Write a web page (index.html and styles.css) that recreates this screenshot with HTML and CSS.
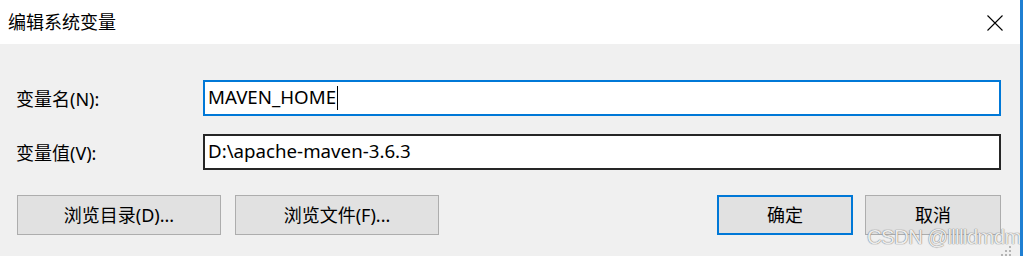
FILE: index.html
```html
<!DOCTYPE html>
<html lang="zh-CN">
<head>
<meta charset="utf-8">
<title>编辑系统变量</title>
<link rel="stylesheet" href="styles.css">
</head>
<body>
<div class="window">
  <div class="titlebar">
    <span class="title">编辑系统变量</span>
    <span class="close" aria-label="关闭">
      <svg width="16" height="16" viewBox="0 0 16 16"><path d="M0.5 0.5 L15.5 15.5 M15.5 0.5 L0.5 15.5" stroke="#000" stroke-width="1.1" fill="none"/></svg>
    </span>
  </div>
  <div class="content">
    <div class="row">
      <label class="label">变量名(N):</label>
      <div class="field focused"><span class="value">MAVEN_HOME</span><span class="caret"></span></div>
    </div>
    <div class="row">
      <label class="label">变量值(V):</label>
      <div class="field"><span class="value">D:\apache-maven-3.6.3</span></div>
    </div>
    <div class="buttons">
      <div class="group">
        <button class="btn wide">浏览目录(D)...</button>
        <button class="btn wide">浏览文件(F)...</button>
      </div>
      <div class="group right">
        <button class="btn default">确定</button>
        <button class="btn">取消</button>
      </div>
    </div>
  </div>
  <div class="watermark">CSDN @llllldmdm</div>
  <svg class="grip" width="12" height="10" viewBox="0 0 12 10">
    <rect x="8" y="0" width="2" height="2" fill="#b4b4b4"/>
    <rect x="4" y="4" width="2" height="2" fill="#b4b4b4"/>
    <rect x="8" y="4" width="2" height="2" fill="#b4b4b4"/>
    <rect x="0" y="8" width="2" height="2" fill="#b4b4b4"/>
    <rect x="4" y="8" width="2" height="2" fill="#b4b4b4"/>
    <rect x="8" y="8" width="2" height="2" fill="#b4b4b4"/>
  </svg>
</div>
</body>
</html>
```

FILE: styles.css
```css
* { box-sizing: border-box; }
html, body {
  margin: 0;
  padding: 0;
  width: 1023px;
  height: 256px;
  overflow: hidden;
}
body {
  font-family: "Noto Sans", "Noto Sans CJK SC", sans-serif;
  color: #000;
  background: #f0f0f0;
}
.window {
  position: relative;
  width: 1023px;
  height: 256px;
  background: #f0f0f0;
  border-right: 3px solid #1f7fd2;
  overflow: hidden;
}
.titlebar {
  height: 44px;
  background: #fff;
  display: flex;
  align-items: center;
  justify-content: space-between;
  padding: 0 17px 2px 8px;
}
.title {
  font-family: "Noto Sans CJK SC", sans-serif;
  font-size: 18px;
  line-height: 20px;
}
.close {
  display: flex;
  width: 16px;
  height: 16px;
  margin-top: 3px;
}
.content {
  padding: 36px 19px 0 16px;
  display: flex;
  flex-direction: column;
  gap: 18px;
}
.row {
  display: flex;
  align-items: center;
  height: 36px;
}
.label {
  width: 187px;
  font-size: 18px;
  line-height: 20px;
  padding-top: 2px;
}
.field {
  flex: 1;
  height: 36px;
  background: #fff;
  border: 2px solid #262626;
  display: flex;
  align-items: center;
  padding: 0 0 2px 3px;
  font-size: 18.7px;
}
.field.focused {
  border-color: #0078d7;
}
.value {
  line-height: 22px;
  white-space: pre;
}
.caret {
  display: inline-block;
  width: 1px;
  height: 24px;
  background: #000;
  margin-left: 1px;
  margin-top: 2px;
}
.buttons {
  display: flex;
  justify-content: space-between;
  margin-top: 7px;
  padding-left: 1px;
}
.group {
  display: flex;
  gap: 14px;
}
.group.right {
  gap: 12px;
}
.btn {
  font-family: "Noto Sans", "Noto Sans CJK SC", sans-serif;
  font-size: 18px;
  line-height: 20px;
  height: 40px;
  width: 136px;
  background: #e1e1e1;
  border: 1px solid #adadad;
  color: #000;
  padding: 0 0 1px;
  margin: 0;
}
.btn.wide {
  width: 204px;
}
.btn.default {
  border: 2px solid #0078d7;
}
.watermark {
  position: absolute;
  left: 867px;
  top: 225px;
  font-family: "Liberation Sans", sans-serif;
  font-size: 20.5px;
  line-height: 24px;
  color: rgba(252, 252, 252, 0.9);
  text-shadow: 0 0 1px #7a7a7a, 0 0 1px #7a7a7a;
  letter-spacing: -0.7px;
  white-space: nowrap;
}
.grip {
  position: absolute;
  right: 7px;
  bottom: 0;
}
```
